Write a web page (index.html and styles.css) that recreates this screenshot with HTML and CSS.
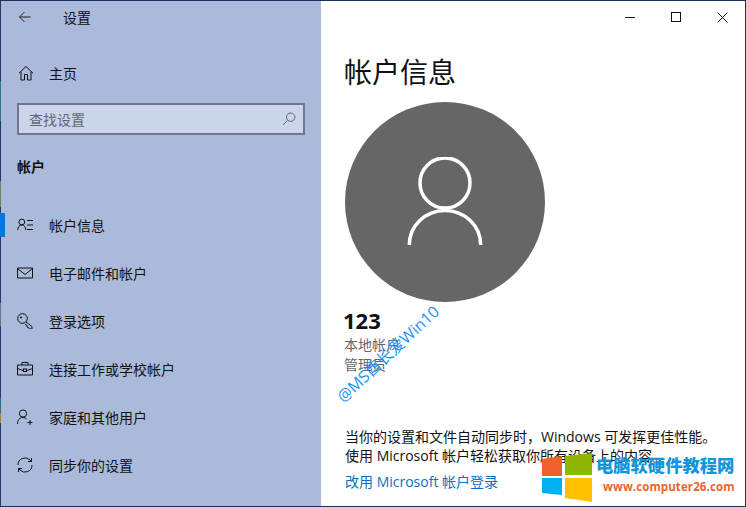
FILE: index.html
```html
<!DOCTYPE html>
<html lang="zh-CN">
<head>
    <meta charset="UTF-8">
    <title>设置</title>
    <link rel="stylesheet" href="styles.css">
</head>
<body>
    <div class="window">
        <div class="frame-edge"></div>
        <aside class="sidebar">
            <div class="titlebar">
                <svg class="back-icon" width="16" height="16" viewBox="0 0 16 16"><path d="M13.500 8H2.500M7.500 3L2.500 8l5 5" fill="none" stroke="#222" stroke-width="1"/></svg>
                <span class="app-title">设置</span>
            </div>
            <div class="home-row">
                <svg class="nav-icon" width="16" height="16" viewBox="0 0 16 16"><path d="M1 8.200L8 1.500l7 6.700M3 6.800V15h3.500V9.500h3V15H13V6.800" fill="none" stroke="#111" stroke-width="1"/></svg>
                <span>主页</span>
            </div>
            <div class="search-box">
                <span>查找设置</span>
                <svg width="14" height="14" viewBox="0 0 14 14"><circle cx="8.700" cy="5.200" r="4.200" fill="none" stroke="#666" stroke-width="1"/><path d="M5.700 8.300L1 13" stroke="#666" stroke-width="1"/></svg>
            </div>
            <div class="section-title">帐户</div>
            <nav class="nav-list">
                <div class="nav-item active">
                    <svg class="nav-icon" width="16" height="16" viewBox="0 0 16 16"><circle cx="4.800" cy="5" r="2.900" fill="none" stroke="#111"/><path d="M.8 13c0-3 1.600-5 4-5s4 2 4 5M10 3.500h6M10 8h6M10 12.500h6" fill="none" stroke="#111"/></svg>
                    <span>帐户信息</span>
                </div>
                <div class="nav-item">
                    <svg class="nav-icon" width="16" height="16" viewBox="0 0 16 16"><path d="M.5 3h15v10H.5zM.5 3.500L8 9.500l7.500-6" fill="none" stroke="#111"/></svg>
                    <span>电子邮件和帐户</span>
                </div>
                <div class="nav-item">
                    <svg class="nav-icon" width="16" height="16" viewBox="0 0 16 16"><circle cx="5.500" cy="5.500" r="4.800" fill="none" stroke="#111"/><circle cx="4" cy="4.500" r="1" fill="#111"/><path d="M9 9l6 4.500V16h-2.500l-1-1.500-1.500-.5v-1.500L8 11.500" fill="none" stroke="#111"/></svg>
                    <span>登录选项</span>
                </div>
                <div class="nav-item">
                    <svg class="nav-icon" width="16" height="16" viewBox="0 0 16 16"><path d="M.5 4h15v10H.5zM5 4V1.500h6V4M.5 7.500L6 9.500M15.500 7.500L10 9.500" fill="none" stroke="#111"/><rect x="6.500" y="8" width="3" height="2.500" fill="none" stroke="#111"/></svg>
                    <span>连接工作或学校帐户</span>
                </div>
                <div class="nav-item">
                    <svg class="nav-icon" width="16" height="16" viewBox="0 0 16 16"><circle cx="6" cy="4.500" r="3.600" fill="none" stroke="#111"/><path d="M.5 15c0-4 2-6.500 5.500-6.500 1.500 0 2.700.5 3.600 1.400M13 11v5M10.500 13.500h5" fill="none" stroke="#111"/></svg>
                    <span>家庭和其他用户</span>
                </div>
                <div class="nav-item">
                    <svg class="nav-icon" width="16" height="16" viewBox="0 0 16 16"><path d="M1 8a7 7 0 0 1 12-5l1.500 1.500M14.500 1v3.500H11M15 8a7 7 0 0 1-12 5l-1.500-1.500M1.500 15v-3.500H5" fill="none" stroke="#111"/></svg>
                    <span>同步你的设置</span>
                </div>
            </nav>
        </aside>
        <main class="content">
            <div class="window-controls">
                <span class="ctl"><svg width="10" height="10" viewBox="0 0 10 10"><path d="M0 5.500h10" stroke="#111"/></svg></span>
                <span class="ctl"><svg width="10" height="10" viewBox="0 0 10 10"><rect x=".5" y=".5" width="9" height="9" fill="none" stroke="#111"/></svg></span>
                <span class="ctl"><svg width="11" height="11" viewBox="0 0 11 11"><path d="M.5.500l10 10M10.500.500l-10 10" stroke="#111"/></svg></span>
            </div>
            <h1>帐户信息</h1>
            <div class="avatar">
                <svg width="80" height="90" viewBox="0 0 80 90"><circle cx="40" cy="26" r="25" fill="none" stroke="#fff" stroke-width="3.500"/><path d="M4.300 88A35.700 34.500 0 0 1 75.700 88" fill="none" stroke="#fff" stroke-width="3.500"/></svg>
            </div>
            <div class="user-name">123</div>
            <div class="user-meta">本地帐户</div>
            <div class="user-meta">管理员</div>
            <p class="sync-note">当你的设置和文件自动同步时，Windows 可发挥更佳性能。<br>使用 Microsoft 帐户轻松获取你所有设备上的内容。</p>
            <a class="switch-link">改用 Microsoft 帐户登录</a>
        </main>
        <div class="watermark">@MS酋长爱Win10</div>
        <div class="site-logo">
            <svg width="50" height="49" viewBox="0 0 50 49">
                <polygon points="0,6 20,3 20,23 0,23" fill="#f0622d"/>
                <polygon points="23,3 50,0 50,22 23,22" fill="#8db600"/>
                <polygon points="0,25 20,25 20,42 0,40" fill="#00b0f0"/>
                <polygon points="23,25 50,25 50,49 23,45" fill="#ffc000"/>
            </svg>
            <div class="site-text">
                <div class="site-name">电脑软硬件教程网</div>
                <div class="site-url">www.computer26.com</div>
            </div>
        </div>
    </div>
</body>
</html>
```

FILE: styles.css
```css
* {
    box-sizing: border-box;
}
body {
    margin: 0;
    font-family: "Open Sans", "Noto Sans CJK SC", sans-serif;
    font-size: 14px;
    color: #111;
}
.window {
    position: relative;
    display: flex;
    width: 746px;
    height: 507px;
    border: 1px solid #1b2f5e;
    border-left: 0;
    overflow: hidden;
    background-color: white;
}
.frame-edge {
    width: 1px;
    flex-shrink: 0;
    background: linear-gradient(#1f3a6e 0, #1f3a6e 80px, #2b7a80 80px, #2b7a80 120px, #1f3a6e 120px, #1f3a6e 180px, #5f8a5a 180px, #5f8a5a 206px, #1f3a6e 206px, #1f3a6e 302px, #6e7480 302px, #6e7480 325px, #1f3a6e 325px, #1f3a6e 397px, #2c6a74 397px, #2c6a74 412px, #a8803c 412px, #a8803c 422px, #1f3a6e 422px);
}
.sidebar {
    position: relative;
    width: 320px;
    flex-shrink: 0;
    background-color: #abbada;
}
.titlebar {
    display: flex;
    align-items: center;
    height: 31px;
    padding-left: 16px;
}
.app-title {
    margin-left: 30px;
}
.home-row {
    display: flex;
    align-items: center;
    height: 24px;
    margin-top: 29px;
    padding-left: 17px;
    gap: 15px;
}
.search-box {
    display: flex;
    align-items: center;
    justify-content: space-between;
    width: 288px;
    height: 32px;
    margin: 18px 0 0 16px;
    padding: 0 7px 0 10px;
    border: 2px solid #6d7890;
    background-color: #cbd5e9;
    color: #5f6672;
}
.section-title {
    margin: 21px 0 0 16px;
    font-weight: 700;
}
.nav-list {
    margin-top: 25px;
}
.nav-item {
    display: flex;
    align-items: center;
    height: 48px;
    padding-left: 16px;
    gap: 16px;
}
.nav-item.active::before {
    content: "";
    position: absolute;
    left: -1px;
    top: 212px;
    width: 5px;
    height: 24px;
    background-color: #0078d7;
}
.content {
    position: relative;
    flex: 1;
    padding: 0 0 0 23px;
}
.window-controls {
    position: absolute;
    top: 0;
    right: 0;
    display: flex;
}
.ctl {
    display: flex;
    align-items: center;
    justify-content: center;
    width: 46px;
    height: 32px;
}
h1 {
    margin: 49px 0 0;
    font-size: 28px;
    font-weight: 400;
    line-height: 44px;
}
.avatar {
    display: flex;
    align-items: center;
    justify-content: center;
    width: 200px;
    height: 200px;
    margin: 8px 0 0 1px;
    border-radius: 50%;
    background-color: #666;
}
.user-name {
    margin: 3px 0 0 -1px;
    font-size: 22px;
    font-weight: 700;
    line-height: 30px;
}
.user-meta {
    color: #666;
    line-height: 20px;
}
.sync-note {
    margin: 52px 0 0 1px;
    line-height: 19px;
}
.switch-link {
    display: block;
    margin: 7px 0 0 1px;
    color: #0a6fc2;
    line-height: 20px;
}
.watermark {
    position: absolute;
    left: 321px;
    top: 340px;
    color: #1e90ff;
    font-size: 16px;
    white-space: nowrap;
    transform: rotate(-43deg);
}
.site-logo {
    position: absolute;
    left: 542px;
    top: 452px;
    display: flex;
    gap: 4px;
}
.site-name {
    margin-top: 2px;
    color: #1296db;
    font-size: 17.300px;
    font-weight: 900;
    line-height: 22px;
    white-space: nowrap;
}
.site-url {
    margin: 2px 0 0 7px;
    color: #f0622d;
    font-size: 11.500px;
    font-weight: 700;
    letter-spacing: .1px;
    white-space: nowrap;
}
```
